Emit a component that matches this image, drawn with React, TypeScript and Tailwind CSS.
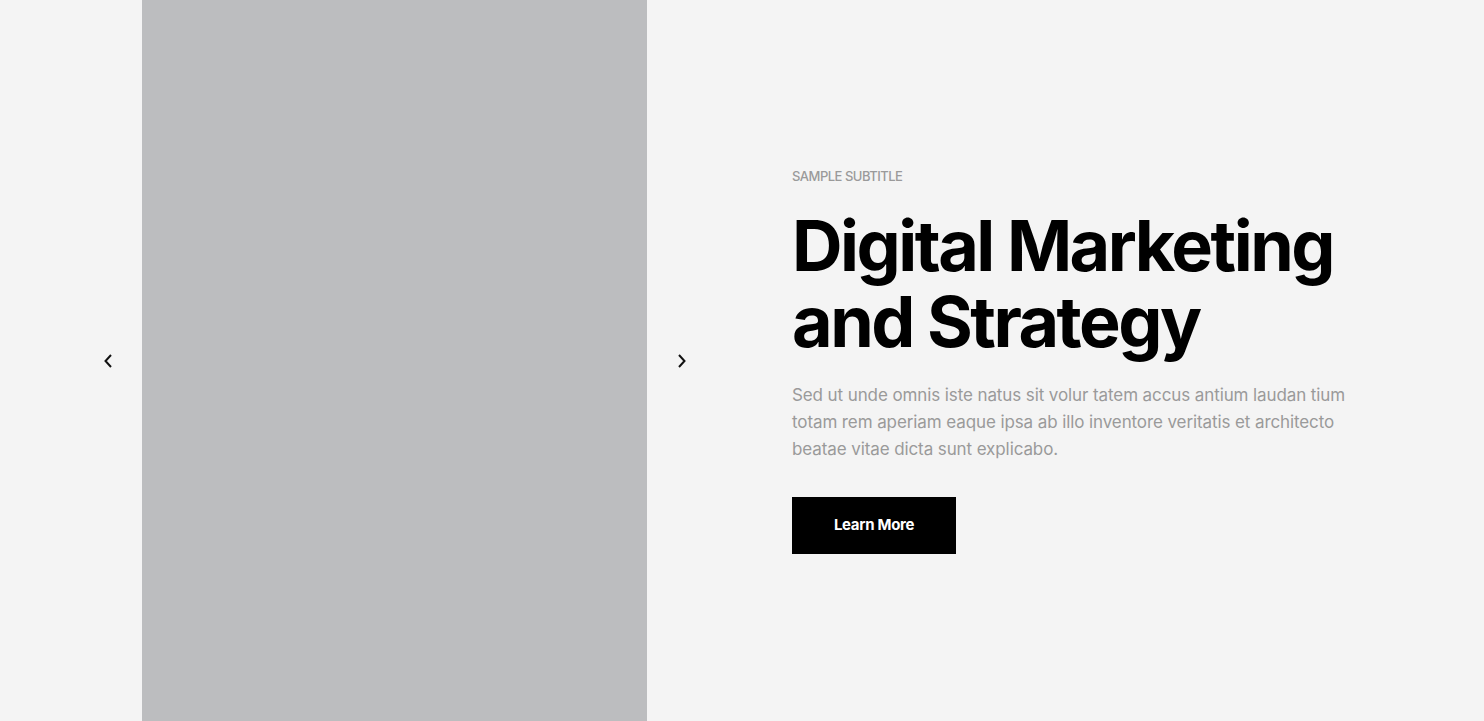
const ChevronLeft = () => (
  <svg width="10" height="16" viewBox="0 0 10 16" fill="none">
    <path d="M8 2L2.5 8L8 14" stroke="#111" strokeWidth="2" />
  </svg>
)

const ChevronRight = () => (
  <svg width="10" height="16" viewBox="0 0 10 16" fill="none">
    <path d="M2 2L7.5 8L2 14" stroke="#111" strokeWidth="2" />
  </svg>
)

const App = () => {
  return (
    <div className="h-[721px] w-full bg-[#f4f4f4] flex overflow-hidden font-['Inter',sans-serif]">
      {/* Prev arrow */}
      <div className="w-[142px] flex items-center justify-end pr-[29px]">
        <button className="flex items-center">
          <ChevronLeft />
        </button>
      </div>

      {/* Image placeholder */}
      <div className="w-[505px] h-full bg-[#bcbdbf]"></div>

      {/* Next arrow */}
      <div className="flex items-center pl-[30px]">
        <button className="flex items-center">
          <ChevronRight />
        </button>
      </div>

      {/* Content */}
      <div className="flex flex-col justify-center pl-[105px]">
        <p className="text-[13px] leading-4 font-medium text-[#9a9a9a] uppercase tracking-[-0.5px]">Sample Subtitle</p>
        <h1 className="mt-[24px] text-[70px] leading-[76px] font-bold text-black tracking-[-2.5px]">
          <span className="block">Digital Marketing</span>
          <span className="block">and Strategy</span>
        </h1>
        <p className="mt-[22px] w-[580px] text-[17px] leading-[27px] text-[#9a9a9a] tracking-[-0.1px]">
          Sed ut unde omnis iste natus sit volur tatem accus antium laudan tium totam rem aperiam eaque ipsa ab illo
          inventore veritatis et architecto beatae vitae dicta sunt explicabo.
        </p>
        <div className="mt-[34px]">
          <button className="w-[164px] h-[57px] bg-black text-white text-[15px] font-bold tracking-[-0.3px]">
            Learn More
          </button>
        </div>
      </div>
    </div>
  )
}

export default App
